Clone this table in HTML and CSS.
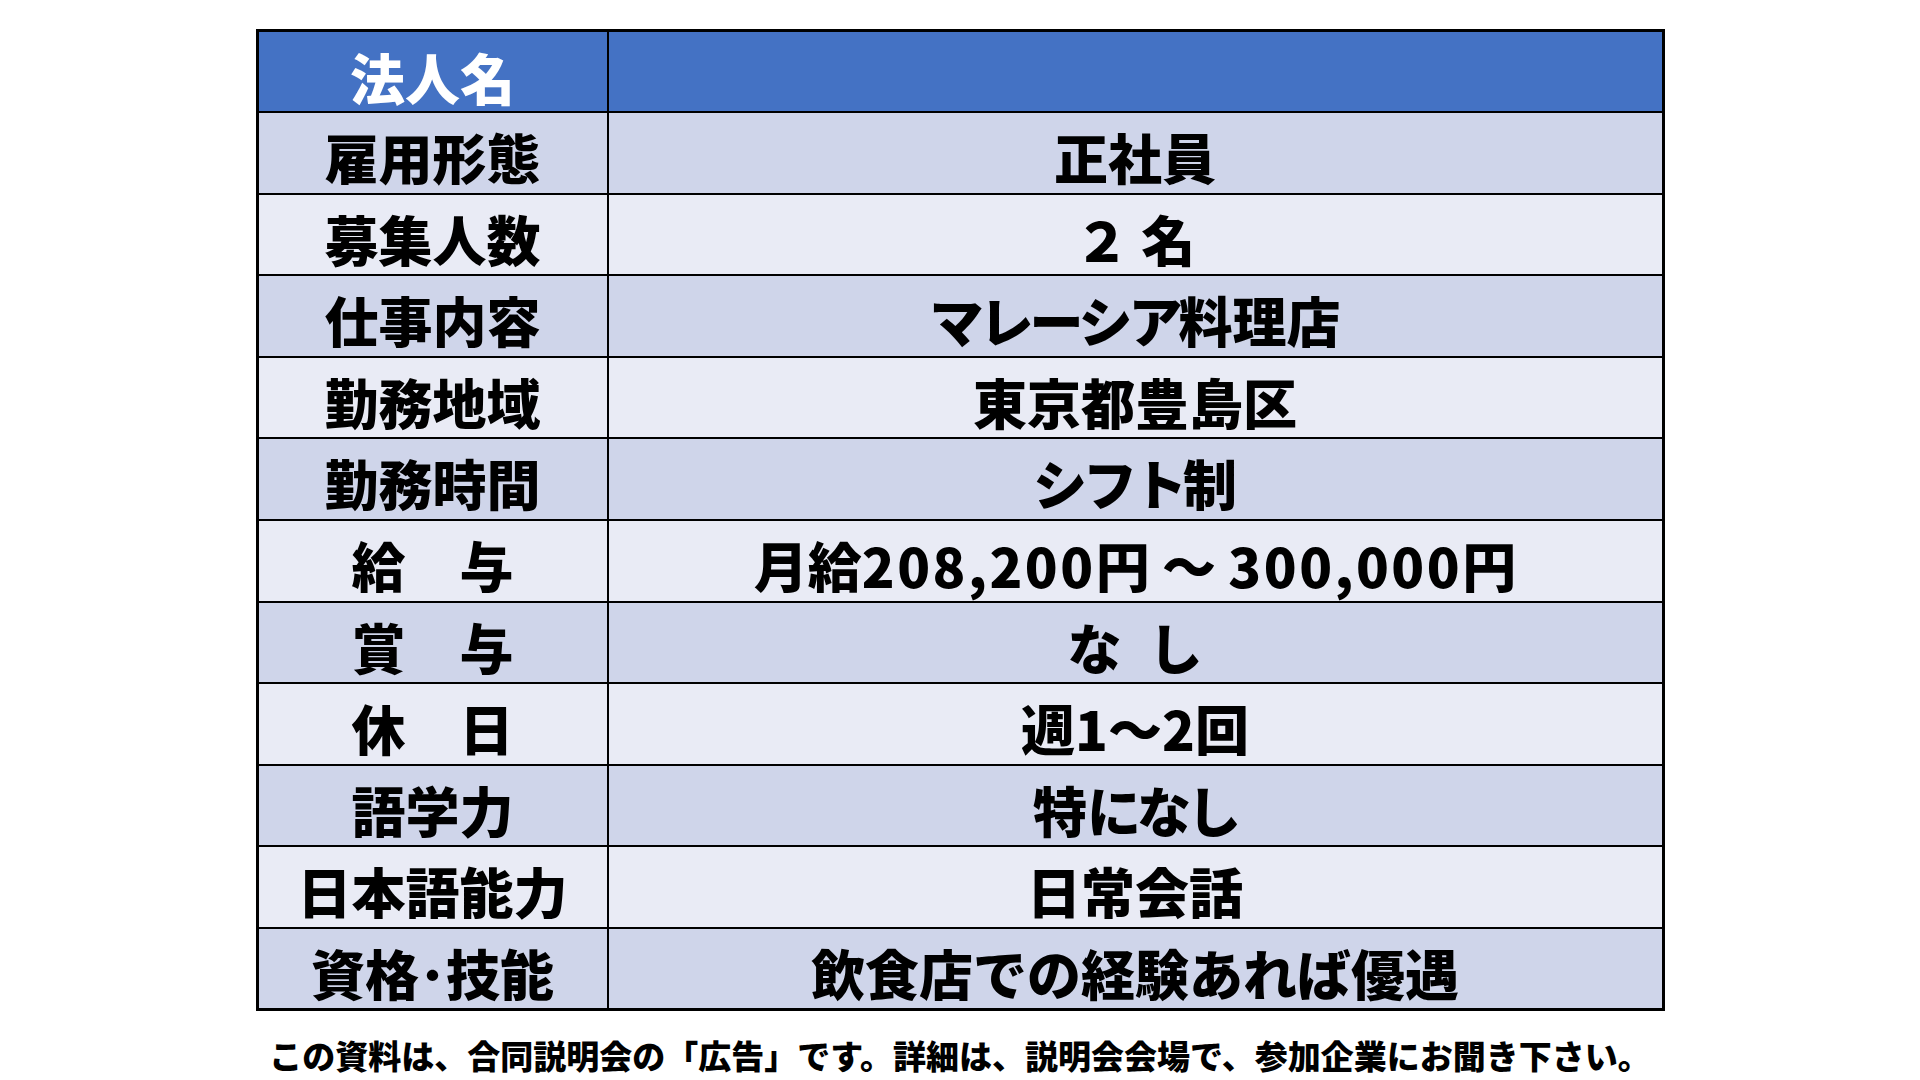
FILE: index.html
```html
<!DOCTYPE html>
<html lang="ja">
<head>
<meta charset="utf-8">
<title>求人票</title>
<link rel="stylesheet" href="styles.css">
</head>
<body>
<main class="page">
  <table class="job">
    <tr class="row head"><th class="label">法人名</th><td class="value"></td></tr>
    <tr class="row dark"><th class="label">雇用形態</th><td class="value">正社員</td></tr>
    <tr class="row light"><th class="label">募集人数</th><td class="value">２ 名</td></tr>
    <tr class="row dark"><th class="label">仕事内容</th><td class="value"><span class="kana">マレーシア</span>料理店</td></tr>
    <tr class="row light"><th class="label">勤務地域</th><td class="value">東京都豊島区</td></tr>
    <tr class="row dark"><th class="label">勤務時間</th><td class="value"><span class="kana">シフト</span>制</td></tr>
    <tr class="row light"><th class="label">給　与</th><td class="value">月給<span class="num">208,200</span>円 ～ <span class="num">300,000</span>円</td></tr>
    <tr class="row dark"><th class="label">賞　与</th><td class="value">な&ensp;し</td></tr>
    <tr class="row light"><th class="label">休　日</th><td class="value">週1～2回</td></tr>
    <tr class="row dark"><th class="label">語学力</th><td class="value">特<span class="kana">になし</span></td></tr>
    <tr class="row light"><th class="label">日本語能力</th><td class="value">日常会話</td></tr>
    <tr class="row dark"><th class="label">資格･技能</th><td class="value">飲食店での経験あれば優遇</td></tr>
  </table>
  <p class="note">この資料は、合同説明会の「広告」です。詳細は、説明会会場で、参加企業にお聞き下さい。</p>
</main>
</body>
</html>
```
FILE: styles.css
```css
html, body {
  margin: 0;
  padding: 0;
  background: #ffffff;
}

body {
  font-family: "Noto Sans CJK JP", "Noto Sans", sans-serif;
  color: #000000;
}

.page {
  display: flex;
  flex-direction: column;
  align-items: center;
  padding-top: 29px;
}

.job {
  width: 1409px;
  border-collapse: collapse;
  border: 3px solid #000000;
  table-layout: fixed;
}

.row {
  height: 81.6px;
}

.row.head { background: #4472c4; }
.row.dark { background: #cfd5ea; }
.row.light { background: #e9ebf5; }

.label,
.value {
  border: 2px solid #000000;
  padding: 9px 0 0;
  text-align: center;
  vertical-align: middle;
  font-size: 54px;
  font-weight: 900;
  line-height: 1.2;
  white-space: nowrap;
}

.label {
  width: 348px;
}

.head .label {
  color: #ffffff;
  font-size: 55px;
}

.kana {
  letter-spacing: -4px;
}

.num {
  letter-spacing: 2.5px;
}

.note {
  margin: 20px 0 0;
  font-size: 33px;
  font-weight: 900;
  line-height: 48px;
  white-space: nowrap;
}
```
